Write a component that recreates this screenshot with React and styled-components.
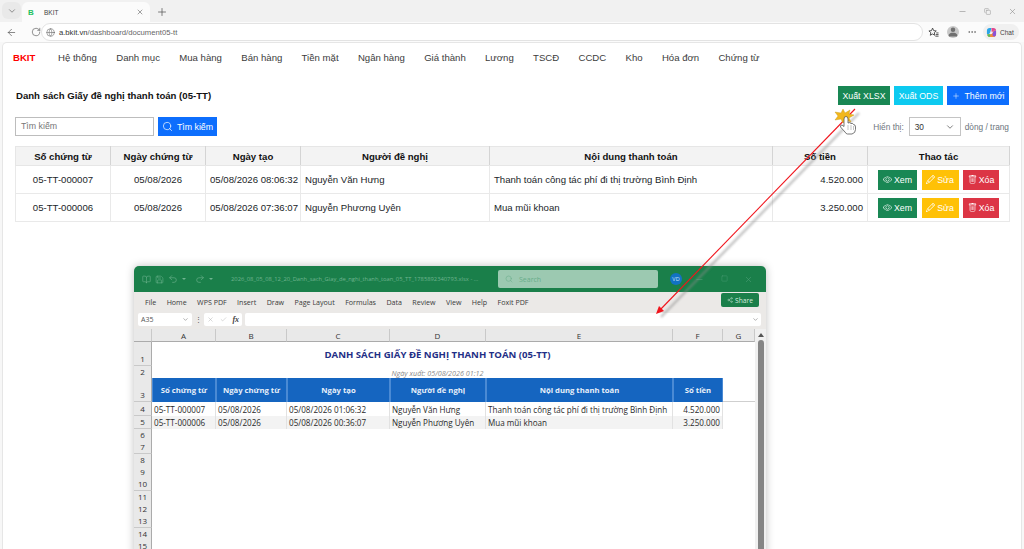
import React from "react";
import styled, { createGlobalStyle } from "styled-components";
import {
  ArrowLeft,
  ChevronDown,
  Copy,
  Ellipsis,
  Globe,
  Minus,
  Plus,
  RotateCw,
  Save,
  Search,
  Square,
  Undo2,
  Redo2,
  Check,
  X,
  BookOpen,
  Share2,
} from "lucide-react";
import { BsEye, BsPencil, BsTrash, BsPersonFill } from "react-icons/bs";

const Global = createGlobalStyle`
  html, body { margin: 0; padding: 0; background: #fff; }
  * { box-sizing: border-box; }
`;

const NAV = ["Hệ thống", "Danh mục", "Mua hàng", "Bán hàng", "Tiền mặt", "Ngân hàng", "Giá thành", "Lương", "TSCĐ", "CCDC", "Kho", "Hóa đơn", "Chứng từ"];
const DOCS = [
  ["05-TT-000007", "05/08/2026", "05/08/2026 08:06:32", "Nguyễn Văn Hưng", "Thanh toán công tác phí đi thị trường Bình Định", "4.520.000"],
  ["05-TT-000006", "05/08/2026", "05/08/2026 07:36:07", "Nguyễn Phương Uyên", "Mua mũi khoan", "3.250.000"],
];
const SHEET = [
  ["05-TT-000007", "05/08/2026", "05/08/2026 01:06:32", "Nguyễn Văn Hưng", "Thanh toán công tác phí đi thị trường Bình Định", "4.520.000"],
  ["05-TT-000006", "05/08/2026", "05/08/2026 00:36:07", "Nguyễn Phương Uyên", "Mua mũi khoan", "3.250.000"],
];
const MENU = ["File", "Home", "WPS PDF", "Insert", "Draw", "Page Layout", "Formulas", "Data", "Review", "View", "Help", "Foxit PDF"];
const PAGE_HEAD = ["Số chứng từ", "Ngày chứng từ", "Ngày tạo", "Người đề nghị", "Nội dung thanh toán", "Số tiền", "Thao tác"];
const PAGE_COLS = [95, 95, 95, 189, 283, 95, 142];
const SHEET_COLS = "18px 64px 71px 103px 96px 187px 50px 32px";

const Screen = styled.div`
  position: relative;
  width: 1024px;
  height: 549px;
  overflow: hidden;
  background: #f7f7f7;
  font-family: "Liberation Sans", Arial, sans-serif;
  color: #212529;
`;

/* browser chrome */
const TabStrip = styled.div`
  height: 22px;
  background: #f1f1f1;
  display: flex;
  align-items: flex-end;
  padding-left: 2px;
  color: #555;
`;
const TabList = styled.div`
  width: 19px;
  height: 17px;
  margin-bottom: 3px;
  border-radius: 6px;
  background: #e9e9e9;
  display: flex;
  align-items: center;
  justify-content: center;
`;
const Tab = styled.div`
  width: 128px;
  height: 20px;
  margin-left: 1px;
  padding: 0 6px;
  background: #fbfbfb;
  border-radius: 6px 6px 0 0;
  display: flex;
  align-items: center;
  font-size: 6.5px;
  color: #444;
`;
const Favicon = styled.b`
  width: 13px;
  color: #1fc15f;
  font-size: 8px;
`;
const TabTitle = styled.span`
  flex: 1;
  margin-left: 3px;
`;
const NewTab = styled.div`
  margin: 0 0 4px 6px;
  display: flex;
`;
const WindowButtons = styled.div`
  margin-left: auto;
  width: 66px;
  height: 22px;
  padding-right: 7px;
  display: flex;
  align-items: center;
  justify-content: space-between;
  color: #888;
`;
const AddressRow = styled.div`
  height: 20px;
  background: #fbfbfb;
  display: flex;
  align-items: center;
  padding: 0 5px;
  color: #555;
`;
const NavIcons = styled.div`
  width: 36px;
  display: flex;
  justify-content: space-between;
  padding-left: 1px;
`;
const AddressBar = styled.div`
  width: 884px;
  height: 18px;
  border: 1px solid #e3e3e3;
  border-radius: 9px;
  background: #fff;
  display: flex;
  align-items: center;
  gap: 4px;
  padding-left: 4px;
  font-size: 7.7px;
  color: #666;
`;
const Host = styled.span`
  color: #333;
`;
const RightTools = styled.div`
  flex: 1;
  display: flex;
  align-items: center;
  margin-left: 5px;
`;
const Avatar = styled.div`
  width: 12px;
  height: 12px;
  margin-left: 8px;
  border-radius: 50%;
  background: #c8c8c8;
  color: #707070;
  display: flex;
  align-items: flex-end;
  justify-content: center;
  overflow: hidden;
`;
const More = styled.div`
  margin-left: 8px;
  display: flex;
`;
const ChatPill = styled.div`
  height: 16px;
  width: 36px;
  margin-left: 6px;
  border-radius: 8px;
  background: #f0f0f0;
  display: flex;
  align-items: center;
  gap: 3px;
  padding-left: 3px;
  font-size: 6.5px;
  color: #444;
`;

/* page */
const Card = styled.div`
  margin: 0 2px;
  height: 507px;
  background: #fff;
  border: 1px solid #e6e6e6;
  border-bottom: 0;
  border-radius: 5px 5px 0 0;
`;
const NavBar = styled.nav`
  height: 28px;
  padding-left: 10px;
  display: flex;
  align-items: center;
  font-size: 9.6px;
  color: #3c3c3c;
`;
const Brand = styled.span`
  color: #f00;
  font-weight: 700;
  width: 45px;
`;
const NavItem = styled.span`
  margin-right: 19.3px;
`;
const Main = styled.main`
  padding: 15px 12px 0 12px;
`;
const HeadRow = styled.div`
  display: flex;
  align-items: center;
  justify-content: space-between;
  height: 19px;
`;
const Title = styled.h1`
  margin: 0;
  padding-left: 1px;
  font-size: 9.6px;
  font-weight: 700;
  color: #111;
`;
const Actions = styled.div`
  display: flex;
  gap: 4px;
`;
const Btn = styled.button`
  height: ${(p) => p.$h || 19}px;
  width: ${(p) => p.$w}px;
  padding: 0;
  border: 1px solid ${(p) => p.$bg};
  background: ${(p) => p.$bg};
  color: #fff;
  font: 8.8px "Liberation Sans", Arial, sans-serif;
  display: inline-flex;
  align-items: center;
  justify-content: center;
  gap: ${(p) => p.$gap || 2}px;
`;
const SearchBtn = styled(Btn)`
  margin-left: 4px;
`;
const ControlRow = styled.div`
  margin-top: 12px;
  height: 19px;
  display: flex;
  align-items: center;
`;
const SearchInput = styled.div`
  width: 139px;
  height: 19px;
  border: 1px solid #bdbdbd;
  padding-left: 5px;
  line-height: 17px;
  font-size: 8.8px;
  color: #777;
`;
const PageSize = styled.div`
  margin-left: auto;
  display: flex;
  align-items: center;
  font-size: 8.3px;
  color: #6c757d;
`;
const SizeSelect = styled.div`
  width: 52px;
  height: 19px;
  margin: 0 4px 0 5px;
  border: 1px solid #c4c4c4;
  padding: 0 5px;
  display: flex;
  align-items: center;
  justify-content: space-between;
  color: #333;
`;
const DataTable = styled.table`
  margin-top: 10px;
  width: 994px;
  table-layout: fixed;
  border-collapse: collapse;
  font-size: 9.6px;
  color: #212529;
`;
const HeadCell = styled.th`
  height: 19px;
  padding: 0;
  background: #f3f3f3;
  border: 1px solid #e6e6e6;
  border-right: 1px solid #d4d4d4;
  color: #111;
  font-weight: 700;
  font-size: 9.6px;
`;
const Cell = styled.td`
  height: 28px;
  padding: 0 4px;
  border: 1px solid #e9e9e9;
  text-align: ${(p) => p.$align || "left"};
  white-space: nowrap;
`;
const RowActions = styled.div`
  display: flex;
  justify-content: center;
  gap: 4.5px;
`;

/* excel window */
const ExcelWindow = styled.section`
  position: absolute;
  left: 134px;
  top: 266px;
  width: 632px;
  height: 290px;
  border-radius: 5px 5px 0 0;
  background: #ebe9e7;
  box-shadow: 0 0 8px rgba(0, 0, 0, 0.25);
  overflow: hidden;
  font-family: "Open Sans", "Noto Sans", sans-serif;
`;
const ExcelTitle = styled.div`
  height: 26px;
  background: #1a7f4a;
  display: flex;
  align-items: center;
  padding-left: 8px;
  color: #6fb48f;
  font-size: 5.8px;
`;
const TitleIcons = styled.div`
  width: 89px;
  display: flex;
  align-items: center;
  gap: 4px;
`;
const TitleCaret = styled.span`
  width: 0;
  height: 0;
  margin-right: 5px;
  border: 2px solid transparent;
  border-bottom: 0;
  border-top: 2px solid #6fb48f;
`;
const FileName = styled.span`
  width: 267px;
  white-space: nowrap;
`;
const ExcelSearch = styled.div`
  width: 160px;
  height: 18px;
  background: #9cc9b1;
  border-radius: 2px;
  display: flex;
  align-items: center;
  gap: 6px;
  padding-left: 7px;
  color: #68ad8b;
  font-size: 7px;
`;
const UserBadge = styled.div`
  width: 12px;
  height: 12px;
  margin-left: 12px;
  border-radius: 50%;
  background: #1272c4;
  color: #cfe4f7;
  font-size: 5.5px;
  text-align: center;
  line-height: 12px;
`;
const WinControls = styled.div`
  margin-left: 13px;
  width: 58px;
  display: flex;
  justify-content: space-between;
  color: #4f9f78;
`;
const MenuBar = styled.div`
  height: 20px;
  display: flex;
  align-items: center;
  padding-left: 11px;
  font-size: 7.1px;
  color: #3a3a3a;
`;
const MenuItem = styled.span`
  margin-right: 10.4px;
`;
const ShareBtn = styled.div`
  position: absolute;
  left: 587px;
  top: 27px;
  width: 38px;
  height: 14px;
  background: #1a7f4a;
  border-radius: 2px;
  color: #d5ebdf;
  font-size: 6.7px;
  display: flex;
  align-items: center;
  justify-content: center;
  gap: 2px;
`;
const FormulaRow = styled.div`
  height: 17px;
  padding: 1px 5px 3px 4px;
  display: flex;
  align-items: stretch;
  color: #555;
  font-size: 7px;
`;
const NameBox = styled.div`
  width: 54px;
  background: #fff;
  border-radius: 2px;
  padding: 0 3px;
  display: flex;
  align-items: center;
  justify-content: space-between;
`;
const Dots = styled.span`
  width: 12px;
  text-align: center;
  line-height: 13px;
`;
const FxBox = styled.div`
  width: 38px;
  background: #fff;
  border-radius: 2px;
  display: flex;
  align-items: center;
  justify-content: space-around;
  color: #aaa;
`;
const Fx = styled.i`
  font-family: "Liberation Serif", serif;
  font-weight: 700;
  font-size: 8px;
  color: #444;
`;
const FormulaInput = styled.div`
  flex: 1;
  margin-left: 3px;
  background: #fff;
  border-radius: 2px;
  display: flex;
  align-items: center;
  justify-content: flex-end;
  padding-right: 2px;
`;
const SheetArea = styled.div`
  height: 220px;
  display: flex;
`;
const Sheet = styled.div`
  width: 621px;
  background: #fff;
  overflow: hidden;
`;
const SheetRow = styled.div`
  display: grid;
  grid-template-columns: ${SHEET_COLS};
  height: ${(p) => p.$h}px;
`;
const ColHead = styled.div`
  background: #e9e9e9;
  border-right: 1px solid #c9c9c9;
  border-bottom: 1px solid #ababab;
  font-size: 8px;
  color: #333;
  display: flex;
  align-items: center;
  justify-content: center;
`;
const RowNum = styled.div`
  background: #e9e9e9;
  border-right: 1px solid #ababab;
  border-bottom: 1px solid #c9c9c9;
  font-size: 8px;
  line-height: 12px;
  color: #333;
  display: flex;
  align-items: flex-end;
  justify-content: center;
`;
const Merged = styled.div`
  grid-column: 2 / span 6;
  display: flex;
  align-items: center;
  justify-content: center;
  white-space: nowrap;
`;
const SheetTitle = styled(Merged)`
  font-size: 9.6px;
  font-weight: 700;
  color: #1f2f86;
`;
const SheetDate = styled(Merged)`
  font-size: 7.2px;
  font-style: italic;
  color: #8a8a8a;
`;
const BlueCell = styled.div`
  background: #1565c0;
  border: 1px solid #4a8ad4;
  border-width: 0 1px;
  color: #e8f0fa;
  font-size: 7.7px;
  font-weight: 700;
  display: flex;
  align-items: center;
  justify-content: center;
`;
const RestCell = styled.div`
  border-bottom: 1px solid #cfcfcf;
`;
const BodyCell = styled.div`
  background: ${(p) => (p.$alt ? "#f3f3f3" : "#fff")};
  border-right: 1px solid #e2e2e2;
  color: #2a2a2a;
  font-size: 8.1px;
  padding: 0 2px;
  display: flex;
  align-items: center;
  justify-content: ${(p) => (p.$right ? "flex-end" : "flex-start")};
  white-space: nowrap;
  overflow: hidden;
`;
const ScrollBar = styled.div`
  width: 11px;
  background: #f0f0f0;
  padding: 0 2px;
  display: flex;
  flex-direction: column;
  align-items: center;
  color: #555;
`;
const ScrollUp = styled.div`
  width: 0;
  height: 0;
  margin: 4px 0 3px;
  border: 3px solid transparent;
  border-top: 0;
  border-bottom: 4px solid #555;
`;
const ScrollThumb = styled.div`
  width: 6px;
  flex: 1;
  background: #858585;
  border-radius: 3px 3px 0 0;
`;

/* red annotation lying over the screenshot */
const Annotation = styled.svg`
  position: absolute;
  left: 0;
  top: 0;
  pointer-events: none;
`;

const icon = { strokeWidth: 1.5 };

const CopilotLogo = () => (
  <svg width="11" height="11" viewBox="0 0 12 12">
    <path d="M1 4 Q1 1 4 1 H6 L4.5 6 Q4 8 2 8 Q1 8 1 7Z" fill="#2aa6e8" />
    <path d="M6 1 H8 Q11 1 11 4 L9 4 Q7.5 4 7 5.5 L6 5Z" fill="#e0498f" />
    <path d="M1.5 8 H5 Q7 8 7.5 6 L8 4 H10 Q11 4 11 5 V8 Q11 11 8 11 H4 Q1.5 11 1.5 8Z" fill="#f58a3c" />
    <path d="M7.5 6 L9 4.2 H11 V8 Q11 10 9 10.5 L7 9Z" fill="#8a4fd8" />
    <path d="M1.5 8 H5 L4 11 Q1.5 11 1.5 8Z" fill="#52bf5e" />
  </svg>
);

const FavoritesIcon = () => (
  <svg width="11" height="11" viewBox="0 0 12 12" fill="none" stroke="#444" strokeWidth="1">
    <path d="M5 1.2 L6.2 4 L9 4.3 L6.9 6.2 L7.5 9 L5 7.6 L2.5 9 L3.1 6.2 L1 4.3 L3.8 4Z" />
    <path d="M9 6.5 H11.5 M8.6 8.3 H11.5 M8 10 H11.5" />
  </svg>
);

const BrowserChrome = () => (
  <>
    <TabStrip>
      <TabList><ChevronDown size={10} {...icon} /></TabList>
      <Tab>
        <Favicon>B</Favicon>
        <TabTitle>BKIT</TabTitle>
        <X size={8} {...icon} />
      </Tab>
      <NewTab><Plus size={12} {...icon} /></NewTab>
      <WindowButtons>
        <Minus size={9} {...icon} />
        <Copy size={7} {...icon} />
        <X size={9} {...icon} />
      </WindowButtons>
    </TabStrip>
    <AddressRow>
      <NavIcons>
        <ArrowLeft size={11} {...icon} />
        <RotateCw size={10} {...icon} />
      </NavIcons>
      <AddressBar>
        <Globe size={9} {...icon} />
        <span><Host>a.bkit.vn</Host>/dashboard/document05-tt</span>
      </AddressBar>
      <RightTools>
        <FavoritesIcon />
        <Avatar><BsPersonFill size={12} /></Avatar>
        <More><Ellipsis size={10} {...icon} /></More>
        <ChatPill><CopilotLogo />Chat</ChatPill>
      </RightTools>
    </AddressRow>
  </>
);

const DocumentPage = () => (
  <Card>
    <NavBar>
      <Brand>BKIT</Brand>
      {NAV.map((item) => <NavItem key={item}>{item}</NavItem>)}
    </NavBar>
    <Main>
      <HeadRow>
        <Title>Danh sách Giấy đề nghị thanh toán (05-TT)</Title>
        <Actions>
          <Btn $bg="#198754" $w={52}>Xuất XLSX</Btn>
          <Btn $bg="#0dcaf0" $w={49}>Xuất ODS</Btn>
          <Btn $bg="#0d6efd" $w={62} $gap={5}><Plus size={8} {...icon} />Thêm mới</Btn>
        </Actions>
      </HeadRow>
      <ControlRow>
        <SearchInput>Tìm kiếm</SearchInput>
        <SearchBtn $bg="#0d6efd" $w={59} $gap={4}><Search size={11} {...icon} />Tìm kiếm</SearchBtn>
        <PageSize>
          Hiển thị:
          <SizeSelect>30<ChevronDown size={10} {...icon} /></SizeSelect>
          dòng / trang
        </PageSize>
      </ControlRow>
      <DataTable>
        <colgroup>
          {PAGE_COLS.map((w, i) => <col key={i} width={w} />)}
        </colgroup>
        <thead>
          <tr>{PAGE_HEAD.map((h) => <HeadCell key={h}>{h}</HeadCell>)}</tr>
        </thead>
        <tbody>
          {DOCS.map((row) => (
            <tr key={row[0]}>
              <Cell $align="center">{row[0]}</Cell>
              <Cell $align="center">{row[1]}</Cell>
              <Cell $align="center">{row[2]}</Cell>
              <Cell>{row[3]}</Cell>
              <Cell>{row[4]}</Cell>
              <Cell $align="right">{row[5]}</Cell>
              <Cell>
                <RowActions>
                  <Btn $bg="#198754" $w={39} $h={20}><BsEye size={9} />Xem</Btn>
                  <Btn $bg="#ffc107" $w={37} $h={20}><BsPencil size={9} />Sửa</Btn>
                  <Btn $bg="#dc3545" $w={36} $h={20}><BsTrash size={9} />Xóa</Btn>
                </RowActions>
              </Cell>
            </tr>
          ))}
        </tbody>
      </DataTable>
    </Main>
  </Card>
);

const ExcelSheet = () => (
  <ExcelWindow>
    <ExcelTitle>
      <TitleIcons>
        <BookOpen size={9} {...icon} />
        <Save size={9} {...icon} />
        <Undo2 size={10} {...icon} />
        <TitleCaret />
        <Redo2 size={10} {...icon} />
        <TitleCaret />
      </TitleIcons>
      <FileName>2026_08_05_08_12_20_Danh_sach_Giay_de_nghi_thanh_toan_05_TT_1785892340793.xlsx  -  ...</FileName>
      <ExcelSearch><Search size={8} {...icon} />Search</ExcelSearch>
      <UserBadge>VD</UserBadge>
      <WinControls>
        <Minus size={9} {...icon} />
        <Square size={7} {...icon} />
        <X size={9} {...icon} />
      </WinControls>
    </ExcelTitle>
    <MenuBar>
      {MENU.map((m) => <MenuItem key={m}>{m}</MenuItem>)}
    </MenuBar>
    <ShareBtn><Share2 size={6} {...icon} />Share</ShareBtn>
    <FormulaRow>
      <NameBox>A35<ChevronDown size={7} {...icon} /></NameBox>
      <Dots>⋮</Dots>
      <FxBox><X size={7} {...icon} /><Check size={7} {...icon} /><Fx>fx</Fx></FxBox>
      <FormulaInput><ChevronDown size={7} {...icon} /></FormulaInput>
    </FormulaRow>
    <SheetArea>
      <Sheet>
        <SheetRow $h={13}>
          {["", "A", "B", "C", "D", "E", "F", "G"].map((c) => <ColHead key={c}>{c}</ColHead>)}
        </SheetRow>
        <SheetRow $h={24}>
          <RowNum>1</RowNum>
          <SheetTitle>DANH SÁCH GIẤY ĐỀ NGHỊ THANH TOÁN (05-TT)</SheetTitle>
        </SheetRow>
        <SheetRow $h={12}>
          <RowNum>2</RowNum>
          <SheetDate>Ngày xuất: 05/08/2026 01:12</SheetDate>
        </SheetRow>
        <SheetRow $h={24}>
          <RowNum>3</RowNum>
          {PAGE_HEAD.slice(0, 6).map((h) => <BlueCell key={h}>{h}</BlueCell>)}
          <RestCell />
        </SheetRow>
        {SHEET.map((row, i) => (
          <SheetRow $h={14 - i} key={row[0]}>
            <RowNum>{i + 4}</RowNum>
            {row.map((v, j) => <BodyCell key={j} $alt={i === 1} $right={j === 5}>{v}</BodyCell>)}
          </SheetRow>
        ))}
        {Array.from({ length: 10 }, (_, i) => (
          <SheetRow $h={12.35} key={i}>
            <RowNum>{i + 6}</RowNum>
          </SheetRow>
        ))}
      </Sheet>
      <ScrollBar>
        <ScrollUp />
        <ScrollThumb />
      </ScrollBar>
    </SheetArea>
  </ExcelWindow>
);

const ArrowOverlay = () => (
  <Annotation width="1024" height="549" viewBox="0 0 1024 549">
    <defs>
      <filter id="blur"><feGaussianBlur stdDeviation="1.1" /></filter>
    </defs>
    <path d="M859 113 L661 317" stroke="#8a8a8a" strokeWidth="2.5" opacity="0.5" filter="url(#blur)" />
    <path d="M855 109 L658 312" stroke="#f0141c" strokeWidth="1.1" />
    <path d="M656 314 L659 306 L664 311Z" fill="#f0141c" />
    <path
      d="M843 109 L845 113 L850 110 L849 114 L854 115 L849 118 L851 122 L846 120 L843 123 L841 119 L835 120 L838 116 L835 112 L841 113Z"
      fill="#f2b71c"
      stroke="#c4940f"
      strokeWidth="0.4"
    />
    <path
      d="M844 119 Q844 116.5 846 116.5 Q848 116.5 848 119 V123 Q850 122 851 123.5 Q853 123 853.5 124.5 Q855.5 124.5 855.5 127 V129.5 Q855.5 133 852 134 H847.5 Q846 134 845 132 L840.5 127 Q840 125 842 125 L844 126.5Z"
      fill="#fff"
      stroke="#555"
      strokeWidth="0.8"
    />
    <path d="M848 125 V130 M851 125 V130 M853.5 126 V130" stroke="#888" strokeWidth="0.5" />
  </Annotation>
);

export default function App() {
  return (
    <>
      <Global />
      <Screen>
        <BrowserChrome />
        <DocumentPage />
        <ExcelSheet />
        <ArrowOverlay />
      </Screen>
    </>
  );
}
